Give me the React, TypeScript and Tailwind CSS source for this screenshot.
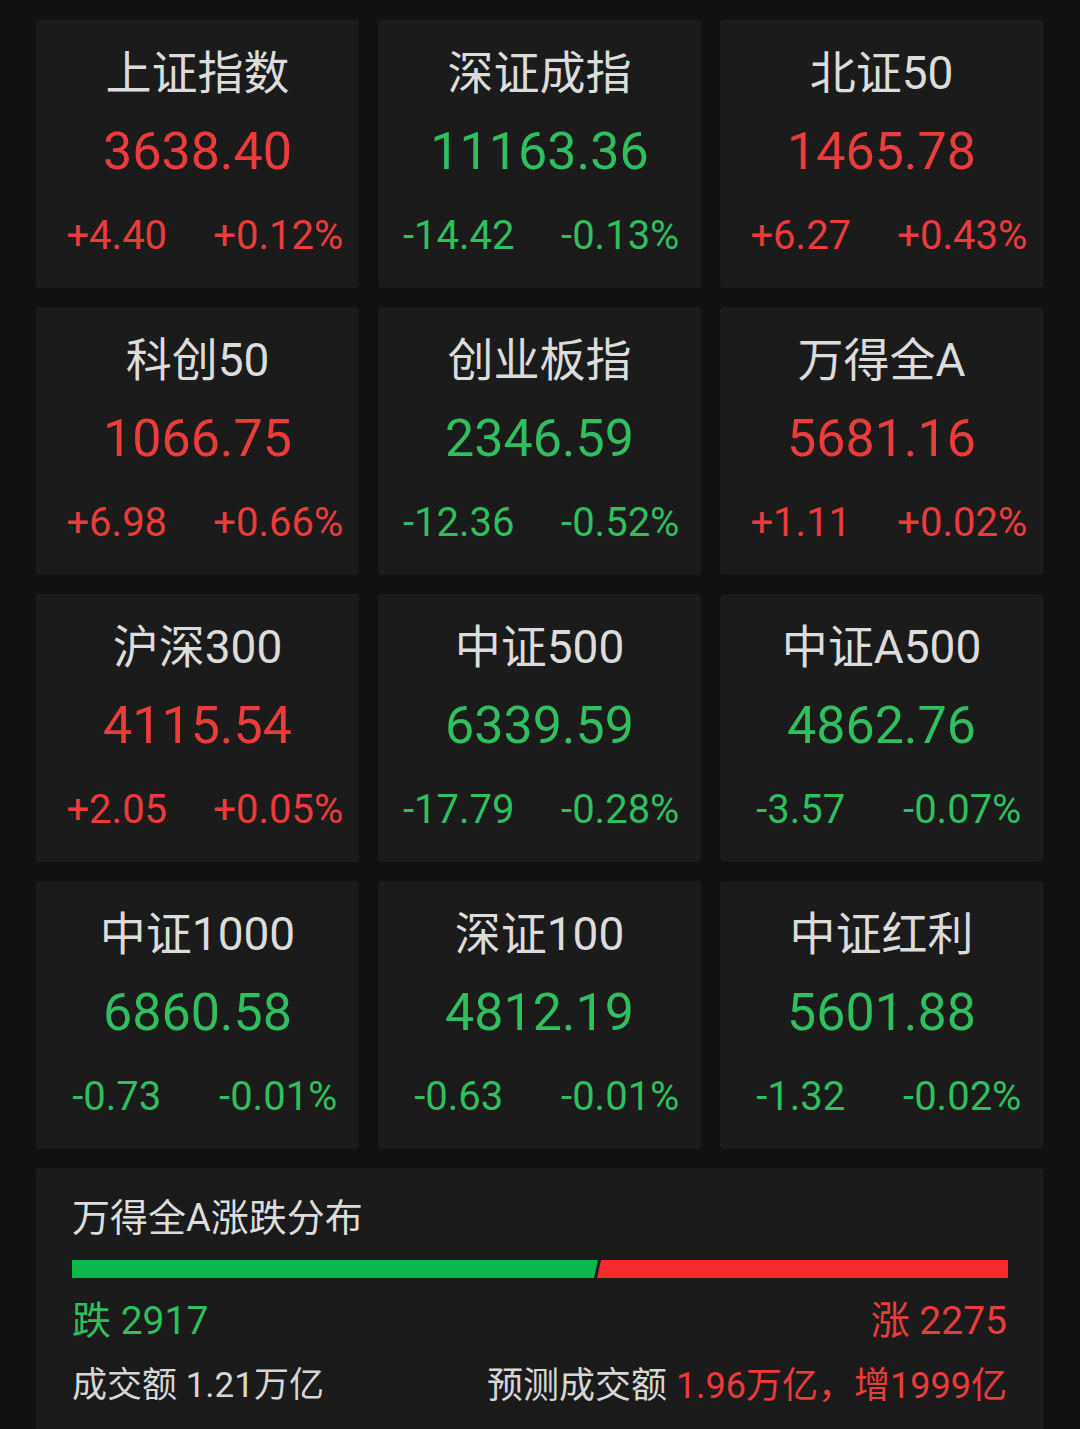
import React from 'react';

type Quote = {
  name: string;
  price: string;
  change: string;
  pct: string;
  up: boolean;
};

const QUOTES: Quote[] = [
  { name: '上证指数', price: '3638.40', change: '+4.40', pct: '+0.12%', up: true },
  { name: '深证成指', price: '11163.36', change: '-14.42', pct: '-0.13%', up: false },
  { name: '北证50', price: '1465.78', change: '+6.27', pct: '+0.43%', up: true },
  { name: '科创50', price: '1066.75', change: '+6.98', pct: '+0.66%', up: true },
  { name: '创业板指', price: '2346.59', change: '-12.36', pct: '-0.52%', up: false },
  { name: '万得全A', price: '5681.16', change: '+1.11', pct: '+0.02%', up: true },
  { name: '沪深300', price: '4115.54', change: '+2.05', pct: '+0.05%', up: true },
  { name: '中证500', price: '6339.59', change: '-17.79', pct: '-0.28%', up: false },
  { name: '中证A500', price: '4862.76', change: '-3.57', pct: '-0.07%', up: false },
  { name: '中证1000', price: '6860.58', change: '-0.73', pct: '-0.01%', up: false },
  { name: '深证100', price: '4812.19', change: '-0.63', pct: '-0.01%', up: false },
  { name: '中证红利', price: '5601.88', change: '-1.32', pct: '-0.02%', up: false },
];

const FONT = { fontFamily: 'Roboto, "Noto Sans CJK SC", sans-serif' };

function QuoteCard({ q }: { q: Quote }) {
  const color = q.up ? 'text-[#ec3b3b]' : 'text-[#2fbf5e]';
  return (
    <div className="h-[268px] rounded-[4px] bg-[#1b1b1b] flex flex-col items-center pt-[26px]">
      <div className="text-[46px] leading-[54px] text-[#dcdcdc]">{q.name}</div>
      <div className={`mt-[22px] text-[52px] leading-[60px] ${color}`}>{q.price}</div>
      <div className={`mt-[30px] w-full grid grid-cols-2 text-[40px] leading-[48px] ${color}`}>
        <span className="text-center">{q.change}</span>
        <span className="text-center">{q.pct}</span>
      </div>
    </div>
  );
}

function UpDownBar() {
  return (
    <svg width="936" height="18" viewBox="0 0 936 18" className="block">
      <polygon points="0,0 526,0 522,18 0,18" fill="#0cb84d" />
      <polygon points="529,0 936,0 936,18 525,18" fill="#f52a2d" />
    </svg>
  );
}

export default function App() {
  return (
    <div className="min-h-[1429px] bg-[#111111] pt-[20px] pl-[36px] pr-[37px] overflow-hidden" style={FONT}>
      <div className="grid grid-cols-3 gap-[19px]">
        {QUOTES.map((q) => (
          <QuoteCard key={q.name} q={q} />
        ))}
      </div>

      {/* 涨跌分布 */}
      <div className="mt-[19px] h-[280px] rounded-t-[4px] bg-[#1b1b1b] px-[36px] pt-[27px]">
        <div className="text-[38px] leading-[46px] text-[#dcdcdc]">万得全A涨跌分布</div>
        <div className="mt-[19px]">
          <UpDownBar />
        </div>
        <div className="mt-[20px] flex justify-between text-[39px] leading-[46px]">
          <span className="text-[#2fbf5e]">跌 2917</span>
          <span className="text-[#ec3b3b]">涨 2275</span>
        </div>
        <div className="mt-[21px] flex justify-between text-[35px] leading-[42px] text-[#d6d6d6]">
          <span>成交额 1.21万亿</span>
          <span className="text-[36px]">
            预测成交额 <span className="text-[#ec3b3b]">1.96万亿，增1999亿</span>
          </span>
        </div>
      </div>
    </div>
  );
}
